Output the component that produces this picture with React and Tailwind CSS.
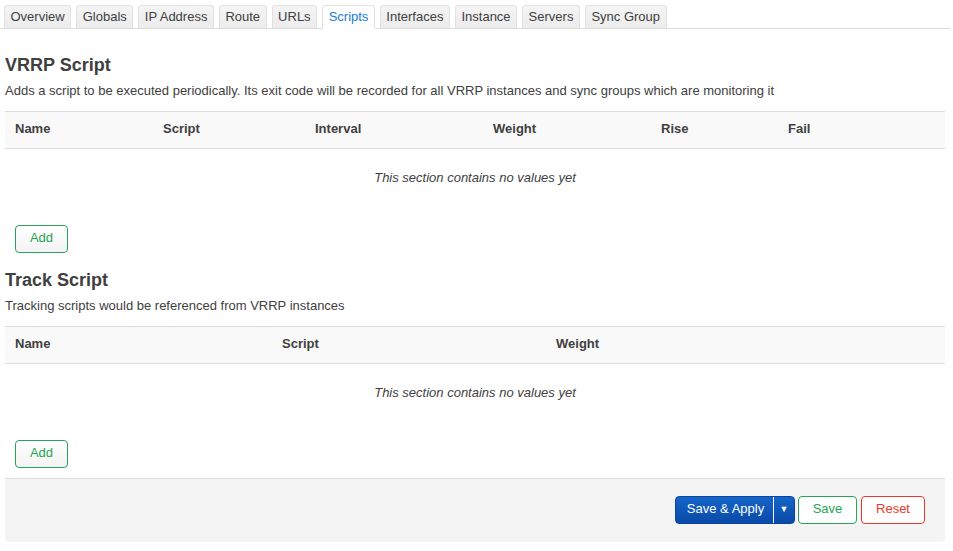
import React from 'react';

const tabs = ['Overview', 'Globals', 'IP Address', 'Route', 'URLs', 'Scripts', 'Interfaces', 'Instance', 'Servers', 'Sync Group'];

function Section({ title, description, columns, template }) {
    return (
        <div>
            <h3 className="text-[18px] font-bold text-[#404040] leading-[22px] pt-[25px] pb-[5px] pl-[5px]">{title}</h3>
            <p className="text-[13px] text-[#404040] leading-[20px] pl-[5px] pb-[10px]">{description}</p>
            <div className="ml-[5px] w-[940px]">
                <div className={`grid ${template} bg-[#f9f9f9] border-y border-[#ddd] h-[38px] items-center`}>
                    {columns.map((c) => (
                        <div key={c} className="pl-[10px] text-[13px] font-bold text-[#404040] -mt-[2px]">{c}</div>
                    ))}
                </div>
                <div className="h-[58px] flex items-center justify-center text-[13px] italic text-[#404040]">
                    This section contains no values yet
                </div>
            </div>
            <div className="pl-[15px] pt-[18px]">
                <button
                    type="button"
                    className="h-[28px] w-[53px] pb-[2px] rounded-[4px] border border-[#2aa35a] bg-gradient-to-b from-white to-[#f3f3f3] text-[13px] text-[#1fa552]"
                >
                    Add
                </button>
            </div>
        </div>
    );
}

export default function App() {
    return (
        <div className="w-[953px] h-[551px] bg-white font-['Liberation_Sans',Arial,sans-serif] text-[#404040] overflow-hidden">
            <div className="pt-[5px] flex items-end gap-[5px] pl-[4px] border-b border-[#ddd] w-[950px]">
                {tabs.map((t) => (
                    <div
                        key={t}
                        className={`h-[24px] px-[5.5px] flex items-center text-[13px] rounded-t-[3px] border border-[#e2e2e2] -mb-px ${
                            t === 'Scripts'
                                ? 'bg-white text-[#1a7cd8] border-b-white'
                                : 'bg-gradient-to-b from-[#f4f4f4] to-[#ececec] text-[#404040] border-b-[#ddd]'
                        }`}
                    >
                        {t}
                    </div>
                ))}
            </div>

            <Section
                title="VRRP Script"
                description="Adds a script to be executed periodically. Its exit code will be recorded for all VRRP instances and sync groups which are monitoring it"
                columns={['Name', 'Script', 'Interval', 'Weight', 'Rise', 'Fail']}
                template="grid-cols-[148px_152px_178px_168px_127px_167px]"
            />
            <div className="-mt-[9px]">
                <Section
                    title="Track Script"
                    description="Tracking scripts would be referenced from VRRP instances"
                    columns={['Name', 'Script', 'Weight']}
                    template="grid-cols-[267px_274px_399px]"
                />
            </div>

            <div className="mt-[10px] ml-[5px] w-[940px] h-[64px] bg-[#f4f4f4] border-t border-[#ddd] rounded-b-[4px] flex items-start pt-[17px] justify-end gap-[3px] pr-[20px]">
                <div className="h-[28px] w-[120px] flex rounded-[4px] bg-gradient-to-b from-[#1565c8] to-[#0a4aa8] border border-[#0a43a0] text-white text-[13px]">
                    <span className="flex-1 flex items-center justify-center pl-[2px] pb-[2px]">Save &amp; Apply</span>
                    <span className="w-[21px] border-l border-white flex items-center justify-center text-[9px]">▼</span>
                </div>
                <button type="button" className="h-[28px] w-[59px] pb-[2px] rounded-[4px] border border-[#2aa35a] bg-white text-[13px] text-[#1fa552]">
                    Save
                </button>
                <button type="button" className="ml-[1px] h-[28px] w-[64px] pb-[2px] rounded-[4px] border border-[#e8392c] bg-white text-[13px] text-[#e8392c]">
                    Reset
                </button>
            </div>
        </div>
    );
}
